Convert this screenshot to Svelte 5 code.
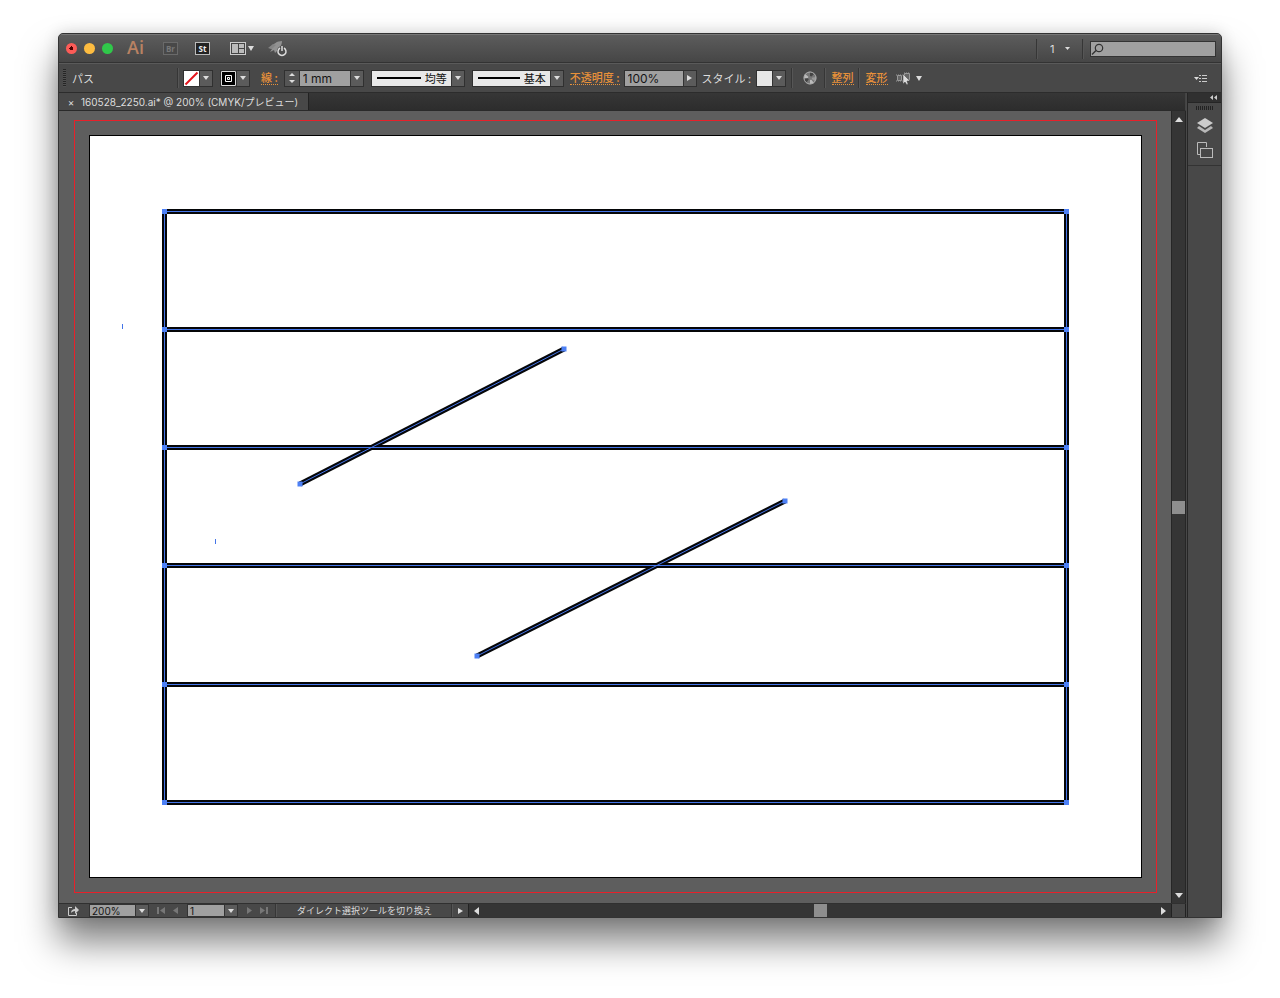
<script>
	let weight = '1 mm'
	let opacity = '100%'
	let zoom = '200%'
	let artboard = '1'
	let search = ''
	let profile = '均等'
	let brush = '基本'
	let workspace = '1'

	// frame and rules, in canvas units
	const left = 105.5
	const right = 1007.5
	const rows = [100.5, 218.5, 336.5, 454.5, 573.5, 691.5]
	const slashes = [
		{ x1: 241, y1: 373, x2: 505, y2: 238 },
		{ x1: 418, y1: 545, x2: 726, y2: 390 }
	]
	const anchors = [
		...rows.flatMap(y => [[left, y], [right, y]]),
		...slashes.flatMap(s => [[s.x1, s.y1], [s.x2, s.y2]])
	]
</script>

<main>
	<div class="window">
		<header class="titlebar">
			<div class="lights">
				<button class="red" aria-label="閉じる"></button>
				<button class="yellow" aria-label="しまう"></button>
				<button class="green" aria-label="拡大"></button>
			</div>
			<span class="logo">Ai</span>
			<button class="app dim">Br</button>
			<button class="app">St</button>
			<button class="arrange" aria-label="ドキュメントレイアウト">
				<svg width="24" height="14" viewBox="0 0 24 14">
					<rect x=".5" y=".5" width="15" height="12" fill="#444" stroke="#ccc" />
					<path d="M2 2h6v9H2zM9 2h5v4H9zM9 7h5v4H9z" fill="#bbb" />
					<path d="M18 4h6l-3 5z" fill="#ddd" />
				</svg>
			</button>
			<button class="rocket" aria-label="GPU プレビュー">
				<svg width="20" height="17" viewBox="0 0 20 17">
					<path d="M14 1C9 1 5 4 4 7L1 8l3 1-2 3 4-2 1 3 2-2C11 8 14 6 14 1z" fill="#929292" />
					<path d="M0 8l5-4 3 1-4 4z" fill="#858585" />
					<circle cx="14" cy="11" r="5" fill="#4c4c4c" />
					<path d="M12 8a4 4 0 1 0 4 0M14 6v5" fill="none" stroke="#ddd" stroke-width="1.5" />
				</svg>
			</button>
			<div class="space"></div>
			<i class="rule"></i>
			<label class="workspace">
				<select bind:value={workspace} aria-label="ワークスペース"><option>1</option></select>
				<svg width="5" height="3" viewBox="0 0 5 3"><path d="M0 0h5L2.500 3z" fill="#ddd" /></svg>
			</label>
			<i class="rule"></i>
			<label class="search">
				<svg width="14" height="12" viewBox="0 0 14 12">
					<circle cx="8" cy="5" r="3.700" fill="none" stroke="#333" stroke-width="1.200" />
					<path d="M5 7.500L1 11.500" stroke="#333" stroke-width="1.400" />
				</svg>
				<input type="text" aria-label="検索" bind:value={search}>
			</label>
		</header>

		<div class="control">
			<i class="grip"></i>
			<span class="kind">パス</span>
			<i class="rule"></i>
			<div class="combo fill">
				<button class="swatch" aria-label="塗り">
					<svg width="15" height="15" viewBox="0 0 15 15"><path d="M1.500 13.500l12-12" stroke="#e3141c" stroke-width="2" /></svg>
				</button>
				<button class="arrow" aria-label="塗りを選択"></button>
			</div>
			<div class="combo stroke">
				<button class="swatch black" aria-label="線の色">
					<svg width="15" height="15" viewBox="0 0 15 15">
						<path d="M.5.500h14v14H.5z" fill="#000" stroke="#ddd" />
						<path d="M4.500 4.500h6v6h-6zM6.500 6.500h2v2h-2z" fill="none" stroke="#fff" />
					</svg>
				</button>
				<button class="arrow" aria-label="線の色を選択"></button>
			</div>
			<a class="link weight" href="#stroke">線 :</a>
			<div class="combo">
				<span class="stepper">
					<button class="up" aria-label="太く"></button>
					<button class="down" aria-label="細く"></button>
				</span>
				<input class="w50" type="text" aria-label="線幅" bind:value={weight}>
				<button class="arrow" aria-label="線幅を選択"></button>
			</div>
			<label class="combo line">
				<span class="paper"><i></i><select bind:value={profile} aria-label="可変線幅プロファイル"><option>均等</option></select></span>
				<span class="arrow"></span>
			</label>
			<label class="combo line">
				<span class="paper"><i></i><select bind:value={brush} aria-label="ブラシ定義"><option>基本</option></select></span>
				<span class="arrow"></span>
			</label>
			<a class="link opacity" href="#opacity">不透明度 :</a>
			<div class="combo">
				<input class="w58" type="text" aria-label="不透明度" bind:value={opacity}>
				<button class="arrow side" aria-label="不透明度スライダー"></button>
			</div>
			<span class="style">スタイル :</span>
			<div class="combo">
				<button class="swatch plain" aria-label="グラフィックスタイル"></button>
				<button class="arrow" aria-label="スタイルを選択"></button>
			</div>
			<i class="rule r1"></i>
			<button class="wheel" aria-label="オブジェクトを再配色">
				<svg width="14" height="14" viewBox="0 0 14 14">
					<circle cx="7" cy="7" r="6.500" fill="#777" />
					<path d="M7 7V1a6 6 0 0 1 4 2zM7 7L1 8a6 6 0 0 0 2 4z" fill="#444" />
					<path d="M7 7L2 3a6 6 0 0 0-1 4zM7 7v6a6 6 0 0 0 4-1z" fill="#bbb" />
					<path d="M7 7l6-1a6 6 0 0 1-1 4z" fill="#999" />
					<circle cx="7" cy="7" r="6" fill="none" stroke="#aaa" />
					<circle cx="7" cy="7" r="2" fill="#777" />
				</svg>
			</button>
			<i class="rule r2"></i>
			<a class="link align" href="#align">整列</a>
			<i class="rule r3"></i>
			<a class="link transform" href="#transform">変形</a>
			<button class="similar" aria-label="類似オブジェクトを選択">
				<svg width="26" height="13" viewBox="0 0 26 13">
					<path d="M1.500 3.500h4v5h-4zM8.500 1.500h5v6h-5z" fill="#666" stroke="#999" />
					<path d="M0 3h7M0 9h7M8 1h6" stroke="#999" stroke-dasharray="1 1" />
					<path d="M7 2v10l2-2 2 3 1-1-1-3h3z" fill="#ddd" stroke="#444" stroke-width=".5" />
					<path d="M20 4h6l-3 5z" fill="#ddd" />
				</svg>
			</button>
			<div class="space"></div>
			<button class="menu" aria-label="パネルメニュー">
				<svg width="13" height="9" viewBox="0 0 13 9">
					<path d="M0 3h5L2.500 6z" fill="#ddd" />
					<path d="M5 1.500h2M8 1.500h5M5 4.500h2M8 4.500h5M5 7.500h2M8 7.500h5" stroke="#ccc" />
				</svg>
			</button>
		</div>

		<div class="body">
			<section class="document">
				<div class="tabs">
					<div class="tab">
						<button aria-label="ファイルを閉じる">×</button>
						<span>160528_2250.ai* @ 200% (CMYK/プレビュー)</span>
					</div>
				</div>
				<div class="view">
					<svg class="canvas" viewBox="0 0 1112 792">
						<rect x="15.500" y="9.500" width="1082" height="772" fill="none" stroke="#e8202a" />
						<rect x="30.500" y="24.500" width="1052" height="742" fill="#fff" stroke="#000" />
						<g stroke="#050608" stroke-width="5">
							<rect x={left} y={rows[0]} width={right - left} height={rows[5] - rows[0]} fill="none" />
							{#each rows.slice(1, 5) as y}
								<line x1={left} x2={right} y1={y} y2={y} />
							{/each}
							{#each slashes as s}
								<line {...s} />
							{/each}
						</g>
						<g stroke="#4475e8">
							<rect x={left} y={rows[0]} width={right - left} height={rows[5] - rows[0]} fill="none" />
							{#each rows.slice(1, 5) as y}
								<line x1={left} x2={right} y1={y} y2={y} />
							{/each}
							{#each slashes as s}
								<line {...s} />
							{/each}
							<path d="M63.500 213v5M156.500 428v5" />
						</g>
						{#each anchors as [x, y]}
							<rect x={x - 2.5} y={y - 2.5} width="5" height="5" fill="#4d80f5" />
						{/each}
					</svg>
					<div class="vscroll">
						<button class="up" aria-label="上へ"></button>
						<i></i>
						<button class="down" aria-label="下へ"></button>
					</div>
				</div>
				<footer>
					<div class="status">
						<button class="share" aria-label="共有">
							<svg width="13" height="10" viewBox="0 0 13 10">
								<path d="M5 1.500H1.500v8h8V7" fill="none" stroke="#ccc" />
								<path d="M4 7c0-3 2-4 4-4V0l4 4-4 4V5C6 5 5 6 4 7z" fill="#ccc" />
							</svg>
						</button>
						<input class="zoom" type="text" aria-label="ズーム" bind:value={zoom}>
						<button class="arrow" aria-label="ズームを選択"></button>
						<button class="nav first" aria-label="最初"><svg width="8" height="7" viewBox="0 0 8 7"><path d="M0 0h2v7H0zM8 0v7L3 3.500z" /></svg></button>
						<button class="nav prev" aria-label="前へ"><svg width="5" height="7" viewBox="0 0 5 7"><path d="M5 0v7L0 3.500z" /></svg></button>
						<input class="board" type="text" aria-label="アートボード" bind:value={artboard}>
						<button class="arrow" aria-label="アートボードを選択"></button>
						<button class="nav next" aria-label="次へ"><svg width="5" height="7" viewBox="0 0 5 7"><path d="M0 0v7l5-3.500z" /></svg></button>
						<button class="nav last" aria-label="最後"><svg width="8" height="7" viewBox="0 0 8 7"><path d="M6 0h2v7H6zM0 0v7l5-3.500z" /></svg></button>
						<i class="rule"></i>
						<span class="message">ダイレクト選択ツールを切り換え</span>
						<i class="rule"></i>
						<button class="side" aria-label="ステータスメニュー"></button>
					</div>
					<div class="hscroll">
						<button class="back" aria-label="左へ"></button>
						<i></i>
						<button class="side" aria-label="右へ"></button>
					</div>
					<div class="corner"></div>
				</footer>
			</section>
			<aside>
				<button class="expand" aria-label="パネルを展開">
					<svg width="7" height="5" viewBox="0 0 7 5"><path d="M3 0v5L0 2.500zM7 0v5L4 2.500z" fill="#ccc" /></svg>
				</button>
				<div class="dock">
					<i></i>
					<button aria-label="レイヤー">
						<svg width="16" height="16" viewBox="0 0 16 16">
							<path d="M8 0l8 5-8 5-8-5z" fill="#ccc" />
							<path d="M0 10l2-2 6 4 6-4 2 2-8 5z" fill="#b8b8b8" />
						</svg>
					</button>
					<button aria-label="アートボード">
						<svg width="16" height="16" viewBox="0 0 16 16">
							<path d="M4 12.500H.5V.500h9V5" fill="none" stroke="#bbb" />
							<rect x="3.500" y="6.500" width="12" height="9" fill="#484848" stroke="#bbb" />
						</svg>
					</button>
				</div>
			</aside>
		</div>
	</div>
</main>

<style>
	:global(body) {
		margin: 0;
		background: #fff;
	}
	main {
		display: flex;
		min-height: 100vh;
		padding: 33px 58px 80px;
		box-sizing: border-box;
		overflow: hidden;
		font-family: "Noto Sans CJK JP", sans-serif;
		font-size: 11px;
		line-height: 16px;
		color: #ddd;
	}
	button, input, select {
		margin: 0;
		padding: 0;
		border: 0;
		border-radius: 0;
		background: none;
		color: inherit;
		font: inherit;
		box-sizing: border-box;
	}
	button {
		display: flex;
		align-items: center;
		justify-content: center;
		flex: none;
	}
	select {
		appearance: none;
	}
	svg {
		display: block;
		flex: none;
	}
	.window {
		flex: 1;
		min-width: 0;
		display: flex;
		flex-direction: column;
		box-sizing: border-box;
		border: 1px solid #333;
		border-radius: 5px 5px 0 0;
		background: #484848;
		overflow: hidden;
		box-shadow: 0 24px 36px rgba(0, 0, 0, .5), 0 0 16px rgba(0, 0, 0, .15);
	}
	.space {
		flex: 1;
	}
	.rule {
		width: 1px;
		height: 20px;
		background: #363636;
		border-right: 1px solid #565656;
		flex: none;
	}

	.titlebar {
		display: flex;
		align-items: center;
		height: 29px;
		box-sizing: border-box;
		padding: 0 5px 0 7px;
		background: linear-gradient(#5c5c5c, #464646);
		border-top: 1px solid #777;
		border-bottom: 1px solid #333;
	}
	.lights {
		display: flex;
		gap: 7px;
	}
	.lights button {
		width: 11px;
		height: 11px;
		border-radius: 50%;
	}
	.red {
		background: radial-gradient(#4c0000 0 2px, #fc5b57 2px);
	}
	.yellow {
		background: #fdbc40;
	}
	.green {
		background: #30c84a;
	}
	.logo {
		width: 36px;
		margin-left: 14px;
		padding-bottom: 4px;
		color: #b98263;
		font: 600 18px/20px "Open Sans", sans-serif;
	}
	.app {
		width: 15px;
		height: 13px;
		margin-right: 17px;
		border: 1px solid #bbb;
		background: #222;
		color: #eee;
		font: bold 8px/10px "Open Sans", sans-serif;
	}
	.app.dim {
		border-color: #6a6a6a;
		background: #484848;
		color: #777;
	}
	.arrange {
		margin-left: 3px;
	}
	.rocket {
		margin-left: 14px;
	}
	.workspace {
		display: flex;
		align-items: center;
		width: 44px;
	}
	.workspace select {
		width: 13px;
		margin-left: 12px;
		font-family: Inter, sans-serif;
	}
	.workspace svg {
		margin-left: 2px;
	}
	.search {
		display: flex;
		align-items: center;
		width: 126px;
		height: 16px;
		margin-left: 6px;
		box-sizing: border-box;
		border: 1px solid #333;
		background: #a0a0a0;
	}
	.search input {
		flex: 1;
		min-width: 0;
		color: #111;
	}

	.control {
		display: flex;
		align-items: center;
		height: 30px;
		box-sizing: border-box;
		padding: 0 14px 0 4px;
		border-top: 1px solid #5a5a5a;
		border-bottom: 1px solid #2c2c2c;
		white-space: nowrap;
	}
	.control > * {
		flex: none;
	}
	.control > .space {
		flex: 1;
	}
	.grip {
		width: 3px;
		height: 18px;
		background: repeating-linear-gradient(#252525 0 1px, #505050 1px 2px);
	}
	.kind {
		width: 105px;
		margin-left: 6px;
	}
	.combo {
		display: flex;
		height: 17px;
		box-sizing: border-box;
		border: 1px solid #303030;
	}
	.fill {
		margin-left: 4px;
	}
	.stroke {
		margin-left: 7px;
	}
	.swatch {
		width: 15px;
		background: #fff;
	}
	.swatch.black {
		background: #000;
	}
	.swatch.plain {
		background: #e6e6e6;
	}
	.arrow {
		width: 13px;
		display: flex;
		align-items: center;
		justify-content: center;
		flex: none;
		box-sizing: border-box;
		border-left: 1px solid #333;
		background: #5b5b5b;
	}
	.arrow::before, .up::before, .down::before, .side::before, .back::before {
		content: "";
		border: 3px solid transparent;
		border-bottom: 0;
		border-top: 4px solid #ddd;
	}
	.arrow.side::before, .side::before {
		border: 3px solid transparent;
		border-right: 0;
		border-left: 5px solid #ddd;
	}
	.link {
		color: #e8913a;
		font-weight: 500;
		line-height: 13px;
		text-decoration: none;
		border-bottom: 1px dotted #e8913a;
	}
	.weight {
		margin: 0 6px 0 11px;
	}
	.stepper {
		width: 14px;
		display: flex;
		flex-direction: column;
		background: #555;
		border-right: 1px solid #333;
	}
	.stepper button {
		flex: 1;
	}
	.up::before {
		border-top: 0;
		border-bottom: 4px solid #ddd;
	}
	.stepper .up::before {
		border-bottom-width: 3px;
	}
	.stepper .down::before {
		border-top-width: 3px;
	}
	.combo input {
		padding: 1px 0 0 3px;
		background: #a0a0a0;
		color: #151515;
		font-family: Inter, sans-serif;
		font-size: 12px;
		line-height: 14px;
	}
	.w50 {
		width: 50px;
	}
	.w58 {
		width: 58px;
	}
	.line {
		margin-left: 7px;
	}
	.paper {
		display: flex;
		align-items: center;
		width: 79px;
		background: #e8e8e8;
		color: #111;
	}
	.line + .line .paper {
		width: 77px;
	}
	.paper i {
		flex: 1;
		height: 2px;
		margin: 0 4px 0 5px;
		background: #000;
	}
	.paper select {
		width: 26px;
	}
	.opacity {
		margin: 0 4px 0 6px;
	}
	.style {
		width: 48px;
		margin: 0 6px 0 5px;
	}
	.r1 {
		margin-left: 5px;
	}
	.wheel {
		margin-left: 10px;
	}
	.r2 {
		margin-left: 7px;
	}
	.align {
		margin-left: 6px;
	}
	.r3 {
		margin-left: 4px;
	}
	.transform {
		margin-left: 6px;
	}
	.similar {
		margin-left: 8px;
	}

	.body {
		flex: 1;
		display: flex;
		min-height: 0;
	}
	.document {
		flex: 1;
		min-width: 0;
		display: flex;
		flex-direction: column;
	}
	.tabs {
		display: flex;
		height: 17px;
		background: linear-gradient(#363636, #2d2d2d);
		border-right: 1px solid #444;
		border-bottom: 1px solid #2a2a2a;
	}
	.tab {
		display: flex;
		align-items: center;
		padding: 0 10px 0 8px;
		background: #484848;
		border-right: 1px solid #222;
		font-family: Inter, "Noto Sans CJK JP", sans-serif;
		font-size: 10px;
		white-space: nowrap;
	}
	.tab button {
		width: 8px;
		margin-right: 6px;
	}
	.view {
		flex: 1;
		display: flex;
		min-height: 0;
	}
	.canvas {
		flex: 1;
		min-width: 0;
		width: 100%;
		height: auto;
		background: #5e5e5e;
	}
	.vscroll {
		display: flex;
		flex-direction: column;
		align-items: center;
		width: 15px;
		box-sizing: border-box;
		border-left: 1px solid #262626;
		border-right: 1px solid #262626;
		background: #353535;
	}
	.vscroll button {
		width: 13px;
		height: 16px;
	}
	.vscroll button::before {
		border-left-width: 4px;
		border-right-width: 4px;
	}
	.vscroll .up::before {
		border-bottom-width: 5px;
	}
	.vscroll .down::before {
		border-top-width: 5px;
	}
	.vscroll i {
		width: 13px;
		height: 13px;
		margin: auto;
		background: #8e8e8e;
	}
	footer {
		display: flex;
		height: 14px;
		box-sizing: border-box;
		border-top: 1px solid #303030;
	}
	.status {
		display: flex;
		align-items: center;
		flex: none;
		width: 409px;
		font-size: 9px;
		line-height: 13px;
		white-space: nowrap;
	}
	.status > * {
		flex: none;
	}
	.share {
		margin-left: 8px;
	}
	.status input {
		height: 13px;
		padding: 1px 0 0 2px;
		border: 1px solid #333;
		background: #a0a0a0;
		color: #151515;
		font-family: Inter, sans-serif;
		font-size: 10px;
		line-height: 12px;
	}
	.zoom {
		width: 47px;
		margin-left: 9px;
	}
	.board {
		width: 38px;
		margin-left: 9px;
	}
	.status .arrow {
		height: 13px;
		border: 1px solid #333;
		border-left: 0;
	}
	.nav {
		fill: #777;
	}
	.first {
		margin-left: 8px;
	}
	.prev {
		margin-left: 8px;
	}
	.next {
		margin-left: 9px;
	}
	.last {
		margin-left: 8px;
	}
	.status .rule {
		height: 13px;
		margin-left: 7px;
	}
	.message {
		width: 149px;
		margin-left: 20px;
	}
	.status .message + .rule {
		margin-left: 5px;
	}
	.status .side {
		margin-left: 5px;
	}
	.hscroll {
		flex: 1;
		display: flex;
		align-items: center;
		justify-content: space-between;
		background: #353535;
		border-left: 1px solid #222;
	}
	.hscroll button {
		width: 15px;
		height: 13px;
	}
	.hscroll button::before {
		border-top-width: 4px;
		border-bottom-width: 4px;
	}
	.back::before {
		border: 4px solid transparent;
		border-left: 0;
		border-right: 5px solid #ddd;
	}
	.hscroll i {
		width: 13px;
		height: 13px;
		background: #8e8e8e;
	}
	.corner {
		width: 15px;
		box-sizing: border-box;
		border-left: 1px solid #222;
		border-right: 1px solid #222;
	}

	aside {
		width: 34px;
		flex: none;
		box-sizing: border-box;
		margin-left: 1px;
		border-left: 1px solid #262626;
	}
	.expand {
		width: 100%;
		height: 10px;
		justify-content: flex-end;
		padding-right: 4px;
		background: #303030;
		border-bottom: 1px solid #252525;
	}
	.dock {
		display: flex;
		flex-direction: column;
		align-items: center;
		gap: 8px;
		padding: 3px 0 7px;
		border-bottom: 1px solid #333;
	}
	.dock i {
		width: 17px;
		height: 4px;
		background: repeating-linear-gradient(90deg, #222 0 1px, #484848 1px 2px);
	}
</style>
